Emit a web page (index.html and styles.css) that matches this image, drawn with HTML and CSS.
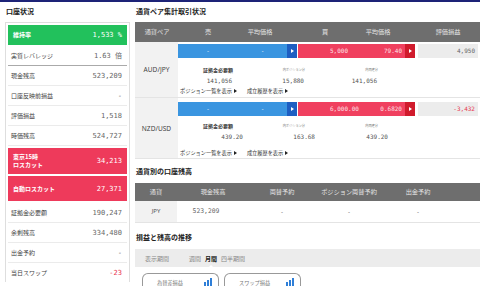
FILE: index.html
```html
<!DOCTYPE html>
<html lang="ja">
<head>
<meta charset="UTF-8">
<title>口座状況</title>
<link rel="stylesheet" href="styles.css">
</head>
<body>

<div class="topbar"></div>

<div class="page">
    <aside class="account">
        <h2 class="sec-title">口座状況</h2>
        <div class="acc-card">
            <div class="acc-row box green"><span class="lbl">維持率</span><span class="num">1,533 %</span></div>
            <div class="acc-row strong-line"><span>実質レバレッジ</span><span class="num">1.63 倍</span></div>
            <div class="acc-row"><span>現金残高</span><span class="num">523,209</span></div>
            <div class="acc-row"><span>口座反映前損益</span><span class="num">-</span></div>
            <div class="acc-row"><span>評価損益</span><span class="num">1,518</span></div>
            <div class="acc-row"><span>時価残高</span><span class="num">524,727</span></div>
            <div class="acc-row box red tall"><span class="lbl">東京15時<br>ロスカット</span><span class="num">34,213</span></div>
            <div class="acc-row box red mid"><span class="lbl">自動ロスカット</span><span class="num">27,371</span></div>
            <div class="acc-row"><span>証拠金必要額</span><span class="num">190,247</span></div>
            <div class="acc-row"><span>余剰残高</span><span class="num">334,480</span></div>
            <div class="acc-row"><span>出金予約</span><span class="num">-</span></div>
            <div class="acc-row"><span>当日スワップ</span><span class="num neg">-23</span></div>
        </div>
    </aside>

    <main class="main">
        <h2 class="sec-title">通貨ペア集計取引状況</h2>
        <div class="thead t1">
            <span>通貨ペア</span><span>売</span><span>平均価格</span><span></span><span>買</span><span>平均価格</span><span></span><span>評価損益</span>
        </div>

        <div class="pair-row">
            <div class="pair-name">AUD/JPY</div>
            <div class="pair-body">
                <div class="bars">
                    <div class="bar sell"><span class="qty">-</span><span class="price">-</span><span class="arrow"></span></div>
                    <div class="bar buy"><span class="qty">5,000</span><span class="price">79.40</span><span class="arrow"></span></div>
                    <div class="pl">4,950</div>
                </div>
                <div class="det">
                    <span class="dl main">証拠金必要額</span><span class="dl">内ポジション分</span><span class="dl">内両建分</span>
                    <span class="dv jpy">141,056</span><span class="dv jpy">15,880</span><span class="dv jpy">141,056</span>
                </div>
                <div class="links"><span>ポジション一覧を表示</span><span>成立履歴を表示</span></div>
            </div>
        </div>

        <div class="pair-row second">
            <div class="pair-name">NZD/USD</div>
            <div class="pair-body">
                <div class="bars">
                    <div class="bar sell"><span class="qty">-</span><span class="price">-</span><span class="arrow"></span></div>
                    <div class="bar buy"><span class="qty">6,000.00</span><span class="price">0.6820</span><span class="arrow"></span></div>
                    <div class="pl neg">-3,432</div>
                </div>
                <div class="det">
                    <span class="dl main">証拠金必要額</span><span class="dl">内ポジション分</span><span class="dl">内両建分</span>
                    <span class="dv">439.20</span><span class="dv">163.68</span><span class="dv">439.20</span>
                </div>
                <div class="links"><span>ポジション一覧を表示</span><span>成立履歴を表示</span></div>
            </div>
        </div>

        <h2 class="sec-title s2">通貨別の口座残高</h2>
        <div class="thead t2">
            <span>通貨</span><span>現金残高</span><span>両替予約</span><span>ポジション両替予約</span><span>出金予約</span><span></span>
        </div>
        <div class="cur-row">
            <span class="cur">JPY</span><span class="num cash">523,209</span><span>-</span><span>-</span><span>-</span><span></span>
        </div>

        <h2 class="sec-title s3">損益と残高の推移</h2>
        <div class="tabs">
            <span class="tab-label">表示期間</span>
            <span class="tab">週間</span>
            <span class="tab active">月間</span>
            <span class="tab">四半期間</span>
        </div>
        <div class="cards">
            <div class="card"><span>為替差損益</span>
                <svg class="ico" width="8" height="8" viewBox="0 0 8 8"><rect x="0" y="4" width="2" height="4" fill="#2f7fd8"/><rect x="3" y="2" width="2" height="6" fill="#2f7fd8"/><rect x="6" y="0" width="2" height="8" fill="#2f7fd8"/></svg>
            </div>
            <div class="card"><span>スワップ損益</span>
                <svg class="ico" width="8" height="8" viewBox="0 0 8 8"><rect x="0" y="4" width="2" height="4" fill="#2f7fd8"/><rect x="3" y="2" width="2" height="6" fill="#2f7fd8"/><rect x="6" y="0" width="2" height="8" fill="#2f7fd8"/></svg>
            </div>
        </div>
    </main>
</div>

</body>
</html>
```

FILE: styles.css
```css
* {
    box-sizing: border-box;
}
body {
    margin: 0;
    width: 480px;
    height: 286px;
    overflow: hidden;
    background: #fff;
    font-family: "Noto Sans CJK JP", "Noto Sans", sans-serif;
    color: #444;
}
.topbar {
    height: 2px;
    background: #1d2377;
}
.page {
    display: flex;
    height: 284px;
    overflow: hidden;
}
.sec-title {
    margin: 0;
    height: 20px;
    line-height: 19px;
    font-size: 7px;
    font-weight: bold;
    color: #222;
    padding-left: 1px;
}
.num {
    font-family: "DejaVu Sans Mono", "Noto Sans CJK JP", monospace;
    font-size: 7px;
    color: #666;
}
.neg {
    color: #e8354f !important;
}

/* left column */
.account {
    width: 135px;
    flex: none;
    padding: 0 5px;
}
.acc-card {
    border: 1px solid #dedede;
    border-bottom: none;
    padding: 2px 2px 0;
}
.acc-row {
    display: flex;
    justify-content: space-between;
    align-items: center;
    height: 20px;
    padding: 0 5px 0 3px;
    border-bottom: 1px solid #ebebeb;
    font-size: 6px;
    color: #444;
}
.acc-row:last-child {
    height: 19px;
    border-bottom: none;
}
.acc-row.strong-line {
    border-bottom-color: #aaa;
    height: 21px;
}
.acc-row.box {
    border: none;
    padding: 0 5px;
    color: #fff;
}
.acc-row.box .num {
    color: #fff;
}
.acc-row.box .lbl {
    font-weight: bold;
    line-height: 8px;
}
.green {
    background: #22c15c;
}
.red {
    background: #ee3a5b;
}
.acc-row.tall {
    height: 26px;
    margin-top: 2px;
}
.acc-row.mid {
    height: 25px;
    margin-top: 2px;
    margin-bottom: 2px;
}

/* right column */
.main {
    flex: 1;
}
.thead {
    display: grid;
    background: #6e6e6e;
    color: #e4e4e4;
    font-size: 6.2px;
    text-align: center;
}
.thead.t1 {
    grid-template-columns: 44px 58px 46px 14px 56px 50px 15px 60px;
    height: 20px;
    line-height: 20px;
}
.pair-row {
    display: flex;
    border-bottom: 1px solid #e4e4e4;
}
.pair-name {
    width: 43px;
    flex: none;
    background: #f2f2f2;
    display: flex;
    align-items: center;
    justify-content: center;
    font-family: "Noto Sans", sans-serif;
    font-size: 6.6px;
    color: #444;
}
.pair-body {
    flex: 1;
    padding-top: 2px;
    padding-bottom: 1px;
}
.bars {
    display: flex;
    height: 14px;
}
.bar {
    display: flex;
    font-family: "DejaVu Sans Mono", monospace;
    font-size: 6px;
    line-height: 14px;
    color: rgba(255, 255, 255, 0.88);
}
.bar.sell {
    width: 119px;
    background: #3a95e0;
}
.bar.sell .qty {
    width: 60px;
    text-align: center;
}
.bar.sell .price {
    width: 49px;
    text-align: center;
}
.bar.sell .arrow {
    background: #1e5ec2;
}
.bar.buy {
    width: 117px;
    margin-left: 1px;
    background: #f0405f;
}
.bar.buy .qty {
    width: 54px;
    padding-left: 32px;
}
.bar.buy .price {
    width: 53px;
    text-align: right;
    padding-right: 3px;
}
.bar.buy .arrow {
    background: #d01b2c;
}
.arrow {
    width: 10px;
    display: flex;
    align-items: center;
    justify-content: center;
}
.arrow::after {
    content: "";
    border-left: 3px solid #fff;
    border-top: 2px solid transparent;
    border-bottom: 2px solid transparent;
}
.pl {
    width: 60px;
    margin-left: 3px;
    background: #ececec;
    text-align: right;
    padding-right: 3px;
    font-family: "DejaVu Sans Mono", monospace;
    font-size: 6px;
    line-height: 14px;
    color: #666;
}
.det {
    display: grid;
    grid-template-columns: 65px 72px 73px;
    margin-top: 7px;
    text-align: right;
}
.dl {
    font-size: 3.2px;
    line-height: 10px;
    color: #777;
    padding-right: 10px;
}
.dl.main {
    font-size: 5px;
    font-weight: bold;
    color: #333;
}
.dv {
    font-family: "DejaVu Sans Mono", monospace;
    font-size: 6px;
    line-height: 11px;
    color: #555;
}
.dv.jpy {
    padding-right: 11px;
}
.links {
    display: flex;
    gap: 10px;
    padding-left: 2px;
    font-size: 5.2px;
    line-height: 10px;
    color: #333;
}
.links span::after {
    content: "";
    display: inline-block;
    margin-left: 2px;
    border-left: 3px solid #222;
    border-top: 2px solid transparent;
    border-bottom: 2px solid transparent;
}
.pair-row.second .pair-body {
    padding-top: 4px;
}
.pair-row.second .det {
    margin-top: 5px;
}
.pair-row.second .links {
    margin-top: 6px;
    line-height: 9px;
}

.sec-title.s2 {
    height: 24px;
    line-height: 24px;
}
.thead.t2,
.cur-row {
    grid-template-columns: 42px 72px 66px 68px 70px 1fr;
}
.thead.t2 {
    height: 18px;
    line-height: 18px;
}
.cur-row {
    display: grid;
    height: 22px;
    line-height: 21px;
    border-bottom: 1px solid #e4e4e4;
    text-align: center;
    font-size: 6px;
    color: #555;
}
.cur {
    background: #f2f2f2;
    font-family: "Noto Sans", sans-serif;
    font-size: 6px;
}
.cur-row .cash {
    font-size: 6.4px;
    padding-right: 14px;
}

.sec-title.s3 {
    height: 26px;
    line-height: 29px;
}
.tabs {
    display: flex;
    align-items: center;
    height: 18px;
    padding-left: 10px;
    background: #ececec;
    font-size: 6px;
    color: #888;
}
.tab-label {
    margin-right: 20px;
}
.tab {
    margin-right: 4px;
}
.tab.active {
    position: relative;
    font-weight: bold;
    color: #222;
}
.tab.active::after {
    content: "";
    position: absolute;
    left: 50%;
    bottom: -6px;
    margin-left: -4px;
    border-bottom: 4px solid #fff;
    border-left: 4px solid transparent;
    border-right: 4px solid transparent;
}
.cards {
    display: flex;
    gap: 5px;
    padding: 6px 0 0 7px;
}
.card {
    width: 77px;
    height: 14px;
    border: 1px solid #999;
    border-bottom: none;
    border-radius: 6px 6px 0 0;
    display: flex;
    align-items: flex-start;
    justify-content: space-between;
    padding: 5px 6px 0 14px;
    font-size: 5.2px;
    line-height: 7px;
    color: #777;
}
.ico {
    margin-top: -1px;
}
```
